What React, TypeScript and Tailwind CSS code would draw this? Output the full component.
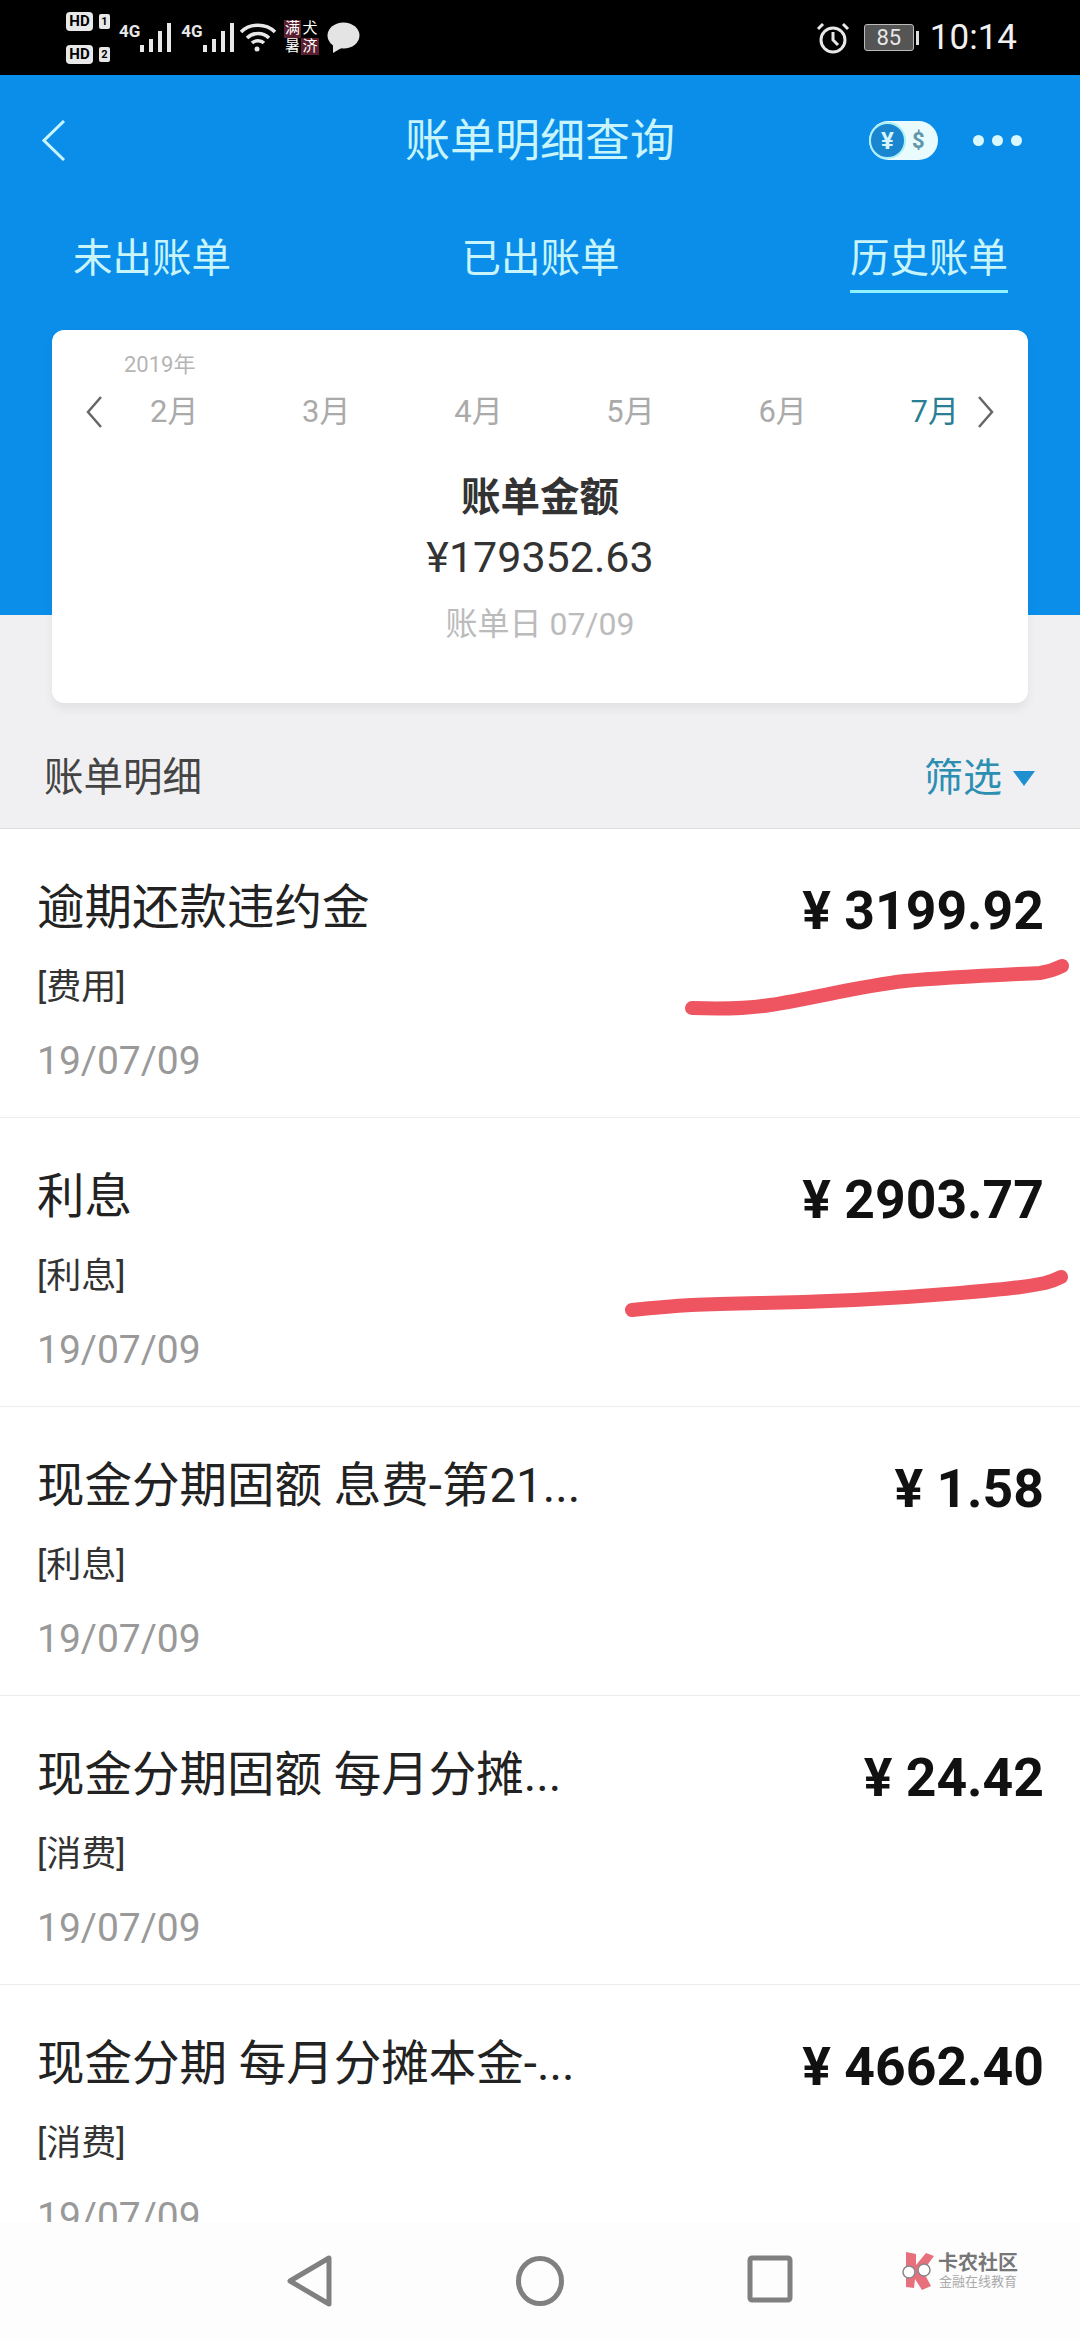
const font = "font-['Roboto','Noto_Sans_CJK_SC',sans-serif]";

type Bill = {
  title: string;
  kind: string;
  amount: string;
};

const bills: Bill[] = [
  { title: '逾期还款违约金', kind: '[费用]', amount: '¥ 3199.92' },
  { title: '利息', kind: '[利息]', amount: '¥ 2903.77' },
  { title: '现金分期固额 息费-第21...', kind: '[利息]', amount: '¥ 1.58' },
  { title: '现金分期固额 每月分摊...', kind: '[消费]', amount: '¥ 24.42' },
  { title: '现金分期 每月分摊本金-...', kind: '[消费]', amount: '¥ 4662.40' },
];

const months = ['2月', '3月', '4月', '5月', '6月', '7月'];

// Signal bars next to the 4G label
function Signal() {
  return (
    <svg width="32" height="32" viewBox="0 0 32 32" fill="#e8e8e8">
      <rect x="0" y="23" width="4" height="7" />
      <rect x="9" y="17" width="4" height="13" />
      <rect x="18" y="9" width="4" height="21" />
      <rect x="27" y="1" width="4" height="29" />
    </svg>
  );
}

function SimBadge({ n }: { n: string }) {
  return (
    <div className="flex items-center gap-[6px]">
      <span className="flex h-[19px] w-[27px] items-center justify-center rounded-[4px] bg-[#e8e8e8] text-[15px] leading-none font-bold text-black">
        HD
      </span>
      <span className="flex h-[15px] w-[11px] items-center justify-center rounded-[2px] bg-[#e8e8e8] text-[11px] leading-none font-bold text-black">
        {n}
      </span>
    </div>
  );
}

function StatusBar() {
  return (
    <div className="flex h-[75px] shrink-0 items-center justify-between bg-black pr-[63px] pl-[66px] text-[#e8e8e8]">
      <div className="flex items-center">
        <div className="flex flex-col gap-[14px]">
          <SimBadge n="1" />
          <SimBadge n="2" />
        </div>
        <div className="ml-[9px] flex items-end">
          <span className="mb-[14px] text-[17px] leading-none font-bold">4G</span>
          <Signal />
        </div>
        <div className="ml-[9px] flex items-end">
          <span className="mb-[14px] text-[17px] leading-none font-bold">4G</span>
          <Signal />
        </div>
        <svg className="ml-[4px]" width="38" height="32" viewBox="0 0 38 32" fill="none" stroke="#e8e8e8" strokeWidth="3.5">
          <path d="M2 10 C11 1 27 1 36 10" />
          <path d="M8 16 C14 10 24 10 30 16" />
          <path d="M13 21 C16 18 22 18 25 21" />
          <circle cx="18" cy="27" r="2.5" fill="#e8e8e8" stroke="none" />
        </svg>
        <div className="ml-[7px] grid h-[35px] w-[35px] grid-cols-2 bg-[#5a2030] text-center text-[15px] leading-[17px] text-white">
          <span>满</span>
          <span className="bg-black">犬</span>
          <span className="bg-black">暑</span>
          <span>济</span>
        </div>
        <svg className="ml-[8px]" width="33" height="31" viewBox="0 0 33 31" fill="#e4e4e4">
          <ellipse cx="16.5" cy="13.5" rx="16" ry="13" />
          <path d="M6 21 L6 31 L16 25 Z" />
        </svg>
      </div>
      <div className="flex items-center">
        <svg width="34" height="34" viewBox="0 0 34 34" fill="none" stroke="#e8e8e8" strokeWidth="3">
          <circle cx="17" cy="19" r="12" />
          <path d="M17 11 V19 L22 24" />
          <path d="M2 8 L7 3" />
          <path d="M32 8 L27 3" />
        </svg>
        <div className="ml-[14px] flex h-[27px] w-[50px] items-center justify-center rounded-[3px] border border-[#bbb] bg-[#555] text-[22px] leading-none text-[#e8e8e8]">
          85
        </div>
        <div className="ml-[2px] h-[14px] w-[3px] bg-[#ddd]" />
        <span className="ml-[11px] text-[35px] leading-none text-[#f0f0f0]">10:14</span>
      </div>
    </div>
  );
}

function BlueHeader() {
  return (
    <div className="h-[540px] shrink-0 bg-[#0b8ee9] text-[#c8f5fb]">
      <div className="relative flex h-[133px] items-center justify-center">
        <svg className="absolute top-[45px] left-[42px]" width="24" height="41" viewBox="0 0 24 41" fill="none" stroke="#c8f5fb" strokeWidth="3">
          <path d="M22 1 L2 20.5 L22 40" />
        </svg>
        <span className="text-[45px] leading-none">账单明细查询</span>
        <div className="absolute top-[46px] left-[869px] flex h-[39px] w-[69px] items-center rounded-full bg-[#e9fbfd]">
          <span className="flex h-[37px] w-[37px] items-center justify-center rounded-full border-2 border-[#a8effa] bg-[#1a86d0] text-[24px] leading-none font-bold text-[#d8f5fb]">
            ¥
          </span>
          <span className="ml-[6px] text-[22px] leading-none font-bold text-[#5e97ad]">$</span>
        </div>
        <div className="absolute top-[60px] left-[973px] flex gap-[8px]">
          <span className="h-[11px] w-[11px] rounded-full bg-[#d8f8fc]" />
          <span className="h-[11px] w-[11px] rounded-full bg-[#d8f8fc]" />
          <span className="h-[11px] w-[11px] rounded-full bg-[#d8f8fc]" />
        </div>
      </div>
      <div className="flex justify-between pr-[72px] pl-[73px] text-[39.5px] leading-none">
        <span className="pt-[31px]">未出账单</span>
        <span className="pt-[31px]">已出账单</span>
        <span className="border-b-[3px] border-[#8ff2fb] pt-[31px] pb-[11px]">历史账单</span>
      </div>
    </div>
  );
}

function MonthArrow({ d }: { d: string }) {
  return (
    <svg width="18" height="32" viewBox="0 0 18 32" fill="none" stroke="#666" strokeWidth="2.5">
      <path d={d} />
    </svg>
  );
}

function SummaryCard() {
  return (
    <div className="relative mx-[52px] -mt-[285px] flex h-[373px] shrink-0 flex-col items-center rounded-[12px] bg-white pt-[24px] shadow-[0_6px_10px_rgba(0,0,0,0.06)]">
      <div className="w-full pl-[72px] text-[22px] leading-[22px] text-[#b5b5b5]">2019年</div>
      <div className="mt-[16px] flex w-full items-center pl-[33px] text-[31px] leading-[40px] text-[#aaaaaa]">
        <MonthArrow d="M16 1 L3 16 L16 31" />
        <div className="ml-[47px] flex w-[809px] justify-between">
          {months.map((m) => (
            <span key={m} className={m === '7月' ? 'text-[#2b7f94]' : ''}>
              {m}
            </span>
          ))}
        </div>
        <div className="ml-[18px]">
          <MonthArrow d="M2 1 L15 16 L2 31" />
        </div>
      </div>
      <div className="mt-[41px] text-[39.5px] leading-[50px] font-bold text-[#333]">账单金额</div>
      <div className="mt-[8px] text-[43px] leading-[52px] text-[#333]">¥179352.63</div>
      <div className="mt-[21px] text-[32px] leading-[40px] text-[#bbbbbb]">账单日 07/09</div>
    </div>
  );
}

function BillRow({ bill }: { bill: Bill }) {
  return (
    <div className="flex h-[289px] shrink-0 items-start justify-between border-b border-[#ececec] pt-[49px] pr-[36px] pl-[37px]">
      <div className="flex flex-col">
        <span className="text-[47.5px] leading-[60px] text-[#222]">{bill.title}</span>
        <span className="mt-[30px] text-[35px] leading-[40px] text-[#333]">{bill.kind}</span>
        <span className="mt-[33px] text-[39px] leading-[40px] text-[#999]">19/07/09</span>
      </div>
      <span className="text-[53.5px] leading-[66px] font-bold text-[#111]">{bill.amount}</span>
    </div>
  );
}

function NavBar() {
  return (
    <div className="relative flex h-[118px] shrink-0 items-start bg-[#fdfdfd] pt-[33px] pl-[285px]">
      <svg width="48" height="52" viewBox="0 0 48 52" fill="none" stroke="#808080" strokeWidth="5" strokeLinejoin="round">
        <path d="M44 3 V49 L5 26 Z" />
      </svg>
      <svg className="ml-[182px]" width="50" height="52" viewBox="0 0 50 52" fill="none" stroke="#808080" strokeWidth="5">
        <ellipse cx="25" cy="26" rx="21.5" ry="22.5" />
      </svg>
      <svg className="ml-[182px]" width="46" height="48" viewBox="0 0 46 48" fill="none" stroke="#808080" strokeWidth="5">
        <rect x="3" y="3" width="40" height="42" rx="2" />
      </svg>
      {/* watermark */}
      <div className="absolute top-[30px] left-[901px] flex items-center gap-[2px]">
        <svg width="35" height="38" viewBox="0 0 35 38">
          <path d="M5 0 L15 2 L15 13 L25 1 L33 4 L22 19 L30 34 L21 38 L14 27 L13 36 L5 35 Z" fill="#e8707c" />
          <circle cx="8" cy="20" r="6" fill="#fff" stroke="#888" strokeWidth="1.5" />
          <circle cx="23" cy="18" r="6" fill="#fff" stroke="#888" strokeWidth="1.5" />
        </svg>
        <div className="flex flex-col items-center">
          <span className="text-[20px] leading-[21px] font-bold text-[#777]">卡农社区</span>
          <span className="text-[13px] leading-[15px] text-[#aaa]">金融在线教育</span>
        </div>
      </div>
    </div>
  );
}

export default function App() {
  return (
    <div className={`relative flex h-[2340px] w-[1080px] flex-col overflow-hidden bg-[#f0f0f2] ${font}`}>
      <StatusBar />
      <BlueHeader />
      <SummaryCard />
      <div className="flex h-[126px] shrink-0 items-center justify-between border-b border-[#dcdcdc] pt-[25px] pr-[45px] pl-[44px]">
        <span className="text-[39.5px] leading-none text-[#444]">账单明细</span>
        <div className="flex items-center gap-[11px]">
          <span className="text-[39px] leading-none text-[#2c8fb2]">筛选</span>
          <span className="h-0 w-0 border-x-[11px] border-t-[15px] border-x-transparent border-t-[#1f8fd0]" />
        </div>
      </div>
      <div className="flex min-h-0 flex-1 flex-col overflow-hidden bg-white">
        {bills.map((bill) => (
          <BillRow key={bill.amount} bill={bill} />
        ))}
      </div>
      <NavBar />
      {/* red pen marks drawn over the screenshot */}
      <svg className="absolute top-0 left-0" width="1080" height="2340" fill="none" stroke="#ee5560" strokeWidth="14" strokeLinecap="round">
        <path d="M692 1008 C720 1009 745 1009 770 1005 C815 998 860 986 905 981 C950 977 1000 975 1040 973 Q1052 971 1062 966" />
        <path d="M632 1310 C680 1305 700 1304 760 1303 S900 1298 960 1293 S1030 1286 1045 1283 Q1053 1281 1061 1277" />
      </svg>
    </div>
  );
}
